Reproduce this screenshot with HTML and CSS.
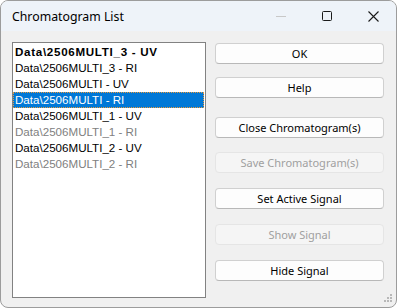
FILE: index.html
```html
<!DOCTYPE html>
<html lang="en">
<head>
  <meta charset="UTF-8" />
  <title>Chromatogram List</title>
  <link rel="stylesheet" href="styles.css">
</head>
<body>
  <div class="window">
    <div class="titlebar">
      <span class="title">Chromatogram List</span>
      <div class="controls">
        <span class="ctl min"><svg width="10" height="10" viewBox="0 0 10 10"><path d="M0 5.5h10" stroke="#c8c8c8" stroke-width="1"/></svg></span>
        <span class="ctl max"><svg width="10" height="10" viewBox="0 0 10 10"><rect x="0.5" y="0.5" width="9" height="9" rx="1" fill="none" stroke="#1a1a1a" stroke-width="1"/></svg></span>
        <span class="ctl close"><svg width="11" height="11" viewBox="0 0 11 11"><path d="M0.5 0.5l10 10M10.5 0.5l-10 10" stroke="#1a1a1a" stroke-width="1.1"/></svg></span>
      </div>
    </div>

    <div class="content">
      <div class="list">
        <div class="item bold">Data\2506MULTI_3 - UV</div>
        <div class="item">Data\2506MULTI_3 - RI</div>
        <div class="item">Data\2506MULTI - UV</div>
        <div class="item selected">Data\2506MULTI - RI</div>
        <div class="item">Data\2506MULTI_1 - UV</div>
        <div class="item dim">Data\2506MULTI_1 - RI</div>
        <div class="item">Data\2506MULTI_2 - UV</div>
        <div class="item dim">Data\2506MULTI_2 - RI</div>
      </div>

      <div class="buttons">
        <button>OK</button>
        <button class="tight">Help</button>
        <button class="spaced">Close Chromatogram(s)</button>
        <button class="tight-1" disabled>Save Chromatogram(s)</button>
        <button>Set Active Signal</button>
        <button disabled>Show Signal</button>
        <button>Hide Signal</button>
      </div>
    </div>

    <svg class="grip" width="8" height="8" viewBox="0 0 8 8">
      <rect x="6" y="0" width="2" height="2" fill="#b8b8b8"/>
      <rect x="3" y="3" width="2" height="2" fill="#b8b8b8"/>
      <rect x="6" y="3" width="2" height="2" fill="#b8b8b8"/>
      <rect x="0" y="6" width="2" height="2" fill="#b8b8b8"/>
      <rect x="3" y="6" width="2" height="2" fill="#b8b8b8"/>
      <rect x="6" y="6" width="2" height="2" fill="#b8b8b8"/>
    </svg>
  </div>
</body>
</html>
```

FILE: styles.css
```css
body {
  margin: 0;
  background: #ffffff;
  font-family: "Noto Sans", Arial, sans-serif;
}

.window {
  position: relative;
  width: 395px;
  height: 306px;
  border: 1px solid #9c9c9c;
  border-radius: 8px;
  background: #f0f0f0;
  overflow: hidden;
}

.titlebar {
  height: 30px;
  background: #eef3f9;
  display: flex;
  align-items: center;
  justify-content: space-between;
}

.title {
  padding-left: 11px;
  font-size: 12.3px;
  color: #000;
}

.controls {
  display: flex;
  height: 100%;
}

.ctl {
  width: 46px;
  display: flex;
  align-items: center;
  justify-content: center;
}

.content {
  display: flex;
  padding: 11px 0 0 11px;
  gap: 9px;
}

.list {
  width: 192px;
  height: 252px;
  border: 1px solid #828282;
  background: #fff;
  padding: 1px 0;
  font-family: "Liberation Sans", Arial, sans-serif;
  font-size: 11.6px;
}

.item {
  height: 16px;
  line-height: 16px;
  padding-left: 2px;
  color: #000;
  white-space: nowrap;
}

.item.bold {
  font-weight: bold;
  letter-spacing: 0.7px;
}

.item.dim {
  color: #808080;
}

.item.selected {
  background: #0078d7;
  color: #fff;
  margin-right: 1px;
  padding-left: 1px;
  border: 1px dotted #e89a3c;
  height: 14px;
  line-height: 14px;
}

.buttons {
  display: flex;
  flex-direction: column;
  gap: 15px;
  padding-top: 1px;
}

.buttons button {
  width: 169px;
  height: 21px;
  background: #fdfdfd;
  border: 1px solid #d0d0d0;
  border-bottom-color: #b8b8b8;
  border-radius: 4px;
  font-family: "Noto Sans", Arial, sans-serif;
  font-size: 11px;
  color: #000;
  padding: 0;
}

.buttons button.tight {
  margin-top: -2px;
}

.buttons button.spaced {
  margin-top: 4px;
}

.buttons button.tight-1 {
  margin-top: -1px;
}

.buttons button:disabled {
  background: #f5f5f5;
  border-color: #e5e5e5;
  color: #a0a0a0;
}

.grip {
  position: absolute;
  right: 4px;
  bottom: 5px;
}
```
